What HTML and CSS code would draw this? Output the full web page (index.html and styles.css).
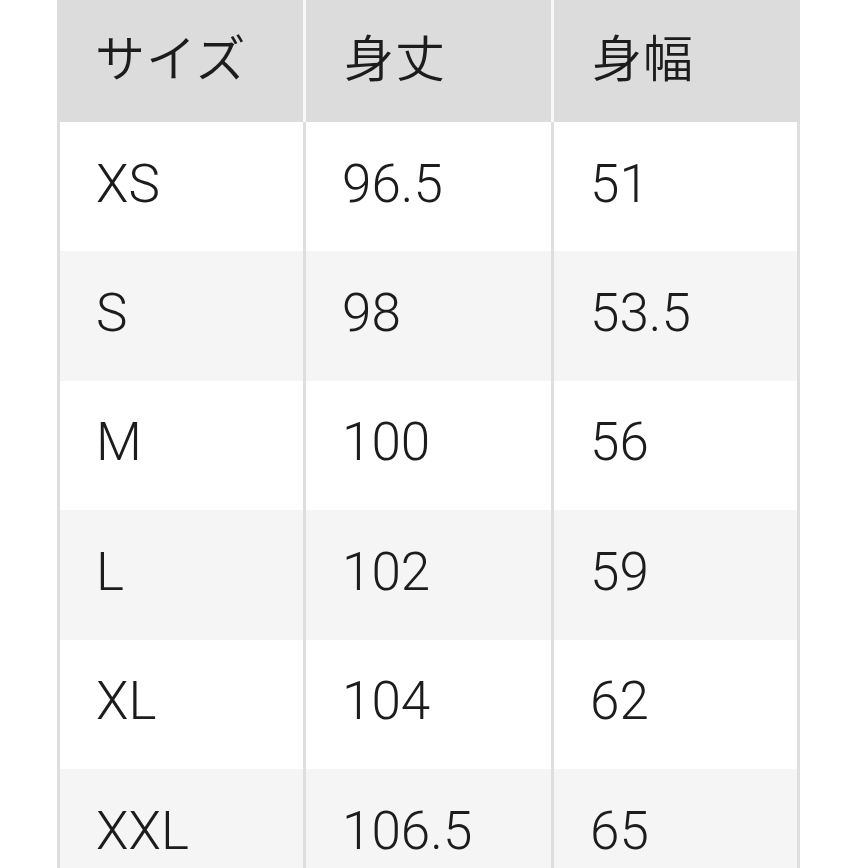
FILE: index.html
```html
<!DOCTYPE html>
<html lang="ja">
<head>
<meta charset="utf-8">
<link rel="stylesheet" href="styles.css">
</head>
<body>
<div class="table">
  <div class="head">
    <div class="hcell">サイズ</div>
    <div class="hcell">身丈</div>
    <div class="hcell">身幅</div>
  </div>
  <div class="row"><div class="cell">XS</div><div class="cell">96.5</div><div class="cell">51</div></div>
  <div class="row alt"><div class="cell">S</div><div class="cell">98</div><div class="cell">53.5</div></div>
  <div class="row"><div class="cell">M</div><div class="cell">100</div><div class="cell">56</div></div>
  <div class="row alt"><div class="cell">L</div><div class="cell">102</div><div class="cell">59</div></div>
  <div class="row"><div class="cell">XL</div><div class="cell">104</div><div class="cell">62</div></div>
  <div class="row alt"><div class="cell">XXL</div><div class="cell">106.5</div><div class="cell">65</div></div>
</div>
</body>
</html>
```
FILE: styles.css
```css
html, body {
  margin: 0;
  padding: 0;
  background: #ffffff;
  overflow: hidden;
}
body {
  font-family: Roboto, "Liberation Sans", "Noto Sans CJK JP", sans-serif;
  color: #1c1c1c;
}
.table {
  margin-left: 57px;
  width: 743px;
}
.head {
  display: grid;
  grid-template-columns: 246px 245px 246px;
  column-gap: 3px;
  background: #f7f7f7;
  height: 122px;
}
.hcell {
  background: #dcdcdc;
  font-family: "Noto Sans CJK JP", sans-serif;
  font-size: 50px;
  font-weight: 350;
  display: flex;
  align-items: center;
  padding-left: 38px;
  padding-bottom: 13px;
  box-sizing: border-box;
  letter-spacing: 1px;
}
.row {
  display: grid;
  grid-template-columns: 243px 245px 243px;
  column-gap: 3px;
  background: #dedede;
  border-left: 3px solid #dedede;
  border-right: 3px solid #dedede;
  height: 129.4px;
}
.cell {
  background: #ffffff;
  font-size: 53px;
  font-weight: 300;
  display: flex;
  align-items: center;
  padding-left: 36px;
  padding-bottom: 6px;
  box-sizing: border-box;
}
.row.alt .cell {
  background: #f5f5f5;
}
```
